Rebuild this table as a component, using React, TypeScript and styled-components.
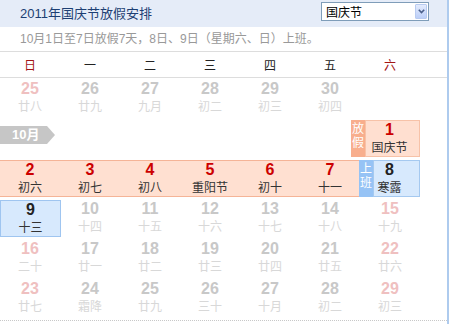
import React from "react";
import styled, { createGlobalStyle } from "styled-components";

const FONT = `"Liberation Sans", "Noto Sans CJK SC", sans-serif`;

const GlobalStyle = createGlobalStyle`
  html, body { margin: 0; padding: 0; background: #fff; }
  body { font-family: ${FONT}; }
  * { box-sizing: border-box; }
`;

const Panel = styled.div`
  width: 449px;
  height: 324px;
  border-right: 2px solid #aecbee;
  overflow: hidden;
`;

const Header = styled.div`
  height: 27px;
  background: #e5ecf8;
  display: flex;
  justify-content: space-between;
  align-items: flex-start;
  padding: 0 18px 0 20px;
`;

const Title = styled.div`
  font-size: 13px;
  line-height: 27px;
  color: #1d3f73;
`;

const SelectBox = styled.div`
  margin-top: 2px;
  width: 108px;
  height: 19px;
  border: 1px solid #7f9db9;
  background: #fff;
  display: flex;
  align-items: center;
  justify-content: space-between;
  padding: 0 1px 0 4px;
  font-size: 12px;
  color: #000;
`;

const SelectArrow = styled.div`
  width: 12px;
  height: 15px;
  border: 1px solid #b8cbf1;
  border-radius: 1px;
  background: linear-gradient(#e3ebfd, #bccff8);
  display: flex;
  align-items: center;
  justify-content: center;
`;

const Sub = styled.div`
  height: 25px;
  line-height: 24px;
  padding-left: 20px;
  font-size: 12px;
  color: #999;
  border-bottom: 1px solid #dddddd;
`;

const WeekHead = styled.div`
  display: grid;
  grid-template-columns: repeat(7, 60px);
  height: 26px;
  align-items: center;
  border-bottom: 1px solid #dddddd;
`;

const WeekDay = styled.div<{ $weekend?: boolean }>`
  text-align: center;
  font-size: 12px;
  color: ${(p) => (p.$weekend ? "#a31515" : "#222")};
`;

const Body = styled.div`
  padding-bottom: 2px;
  border-bottom: 1px dotted #c8c8c8;
`;

const Row = styled.div`
  display: grid;
  grid-template-columns: repeat(7, 60px);
  height: 40px;
  padding-top: 2px;
  align-items: start;
`;

const Cell = styled.div`
  height: 37px;
  text-align: center;
`;

const Num = styled.div<{ $color: string }>`
  font-size: 16px;
  font-weight: bold;
  line-height: 18px;
  color: ${(p) => p.$color};
`;

const Lunar = styled.div<{ $color: string }>`
  font-size: 12px;
  line-height: 18px;
  color: ${(p) => p.$color};
`;

const TodayCell = styled.div`
  height: 37px;
  width: 61px;
  text-align: center;
  background: #d7e9fd;
  border: 1px solid #9fc5f0;
`;

const Band = styled.div`
  grid-column: 1 / 7;
  width: 359px;
  height: 37px;
  display: flex;
  background: #ffe0d1;
  border-top: 1px solid #f5b497;
  border-bottom: 1px solid #f5b497;
`;

const BandDay = styled.div`
  flex: none;
  width: 60px;
  text-align: center;
`;

const SpecialCell = styled.div<{ $shift: number }>`
  grid-column: 7;
  height: 37px;
  display: flex;
  margin-left: ${(p) => p.$shift}px;
`;

const Strip = styled.div<{ $bg: string }>`
  flex: none;
  width: 14px;
  padding-top: 2px;
  background: ${(p) => p.$bg};
  color: #fff;
  font-size: 12px;
  line-height: 14px;
  display: flex;
  flex-direction: column;
  align-items: center;
`;

const SpecialBody = styled.div<{ $bg: string; $border: string; $pr: number }>`
  flex: 1;
  text-align: center;
  background: ${(p) => p.$bg};
  border: 1px solid ${(p) => p.$border};
  padding-right: ${(p) => p.$pr}px;
`;

const MonthTag = styled.div`
  grid-column: 1;
  margin-top: 6px;
  width: 55px;
  height: 18px;
  background: #c6c6c6;
  clip-path: polygon(0 0, 47px 0, 100% 50%, 47px 100%, 0 100%);
  color: #fff;
  font-size: 13px;
  font-weight: bold;
  line-height: 18px;
  padding-left: 12px;
`;

const FADED = "#c8c8c8";
const FADED_LUNAR = "#d8d8d8";
const PINK = "#efc0c0";
const RED = "#cc0000";
const DARK = "#222";

type D = { n: number; l: string };

const weekdays = ["日", "一", "二", "三", "四", "五", "六"];

const row1: D[] = [
  { n: 25, l: "廿八" },
  { n: 26, l: "廿九" },
  { n: 27, l: "九月" },
  { n: 28, l: "初二" },
  { n: 29, l: "初三" },
  { n: 30, l: "初四" },
];

const band: D[] = [
  { n: 2, l: "初六" },
  { n: 3, l: "初七" },
  { n: 4, l: "初八" },
  { n: 5, l: "重阳节" },
  { n: 6, l: "初十" },
  { n: 7, l: "十一" },
];

const row4: D[] = [
  { n: 10, l: "十四" },
  { n: 11, l: "十五" },
  { n: 12, l: "十六" },
  { n: 13, l: "十七" },
  { n: 14, l: "十八" },
  { n: 15, l: "十九" },
];

const row5: D[] = [
  { n: 16, l: "二十" },
  { n: 17, l: "廿一" },
  { n: 18, l: "廿二" },
  { n: 19, l: "廿三" },
  { n: 20, l: "廿四" },
  { n: 21, l: "廿五" },
  { n: 22, l: "廿六" },
];

const row6: D[] = [
  { n: 23, l: "廿七" },
  { n: 24, l: "霜降" },
  { n: 25, l: "廿九" },
  { n: 26, l: "三十" },
  { n: 27, l: "十月" },
  { n: 28, l: "初二" },
  { n: 29, l: "初三" },
];

const FadedDay: React.FC<{ d: D; weekend: boolean }> = ({ d, weekend }) => (
  <Cell>
    <Num $color={weekend ? PINK : FADED}>{d.n}</Num>
    <Lunar $color={FADED_LUNAR}>{d.l}</Lunar>
  </Cell>
);

export default function App() {
  return (
    <Panel>
      <GlobalStyle />
      <Header>
        <Title>2011年国庆节放假安排</Title>
        <SelectBox>
          <span>国庆节</span>
          <SelectArrow>
            <svg width="7" height="5" viewBox="0 0 7 5">
              <path d="M0.8 0.8 L3.5 3.5 L6.2 0.8" fill="none" stroke="#4a5f8a" strokeWidth="1.6" />
            </svg>
          </SelectArrow>
        </SelectBox>
      </Header>
      <Sub>10月1日至7日放假7天，8日、9日（星期六、日）上班。</Sub>
      <WeekHead>
        {weekdays.map((w, i) => (
          <WeekDay key={w} $weekend={i === 0 || i === 6}>
            {w}
          </WeekDay>
        ))}
      </WeekHead>
      <Body>
        <Row>
          {row1.map((d, i) => (
            <FadedDay key={d.n} d={d} weekend={i === 0} />
          ))}
        </Row>
        <Row>
          <MonthTag>10月</MonthTag>
          <SpecialCell $shift={-9}>
            <Strip $bg="#f8ae8d">
              <span>放</span>
              <span>假</span>
            </Strip>
            <SpecialBody $bg="#ffdfd0" $border="#f7c2a8" $pr={6}>
              <Num $color={RED}>1</Num>
              <Lunar $color="#333">国庆节</Lunar>
            </SpecialBody>
          </SpecialCell>
        </Row>
        <Row>
          <Band>
            {band.map((d) => (
              <BandDay key={d.n}>
                <Num $color={RED}>{d.n}</Num>
                <Lunar $color="#333">{d.l}</Lunar>
              </BandDay>
            ))}
          </Band>
          <SpecialCell $shift={-1}>
            <Strip $bg="#96c3f5">
              <span>上</span>
              <span>班</span>
            </Strip>
            <SpecialBody $bg="#d7e9fd" $border="#a5c9f0" $pr={14}>
              <Num $color={DARK}>8</Num>
              <Lunar $color="#333">寒露</Lunar>
            </SpecialBody>
          </SpecialCell>
        </Row>
        <Row>
          <TodayCell>
            <Num $color={DARK}>9</Num>
            <Lunar $color="#333">十三</Lunar>
          </TodayCell>
          {row4.map((d, i) => (
            <FadedDay key={d.n} d={d} weekend={i === 5} />
          ))}
        </Row>
        <Row>
          {row5.map((d, i) => (
            <FadedDay key={d.n} d={d} weekend={i === 0 || i === 6} />
          ))}
        </Row>
        <Row>
          {row6.map((d, i) => (
            <FadedDay key={d.n} d={d} weekend={i === 0 || i === 6} />
          ))}
        </Row>
      </Body>
    </Panel>
  );
}
